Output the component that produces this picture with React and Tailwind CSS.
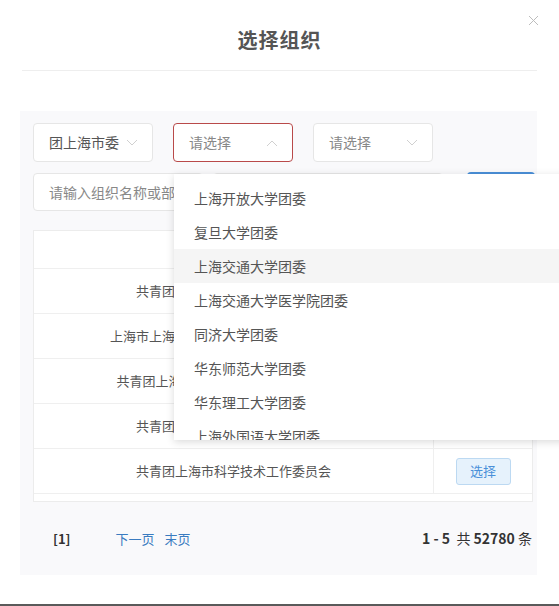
import React from "react";

const FONT = { fontFamily: '"Noto Sans CJK SC", "Noto Sans", sans-serif' };

function Chevron({ up = false }) {
  return (
    <svg width="12" height="8" viewBox="0 0 12 8" className="shrink-0">
      <polyline
        points={up ? "1,7 6,2 11,7" : "1,1 6,6 11,1"}
        fill="none"
        stroke="#d0d0d0"
        strokeWidth="1"
      />
    </svg>
  );
}

function Select({ value, placeholder, active }) {
  return (
    <div
      className={`w-[120px] h-[39px] bg-white rounded-[4px] border flex items-center justify-between pl-[15px] pr-[14px] text-[14px] ${
        active ? "border-[#b94a4a]" : "border-[#e6e6e6]"
      }`}
    >
      <span className={value ? "text-[#555]" : "text-[#888]"}>{value || placeholder}</span>
      <Chevron up={active} />
    </div>
  );
}

const rows = [
  "共青团上海市教育卫生工作委员会",
  "上海市上海青年管理干部学院共青团委员会",
  "共青团上海市城市建设和交通工作委员会",
  "共青团上海市商务工作委员会团委",
  "共青团上海市科学技术工作委员会",
];

const options = [
  "上海开放大学团委",
  "复旦大学团委",
  "上海交通大学团委",
  "上海交通大学医学院团委",
  "同济大学团委",
  "华东师范大学团委",
  "华东理工大学团委",
  "上海外国语大学团委",
];

export default function App() {
  return (
    <div className="relative w-[559px] h-[606px] bg-white overflow-hidden flex flex-col" style={FONT}>
      {/* header */}
      <div className="relative h-[70px] flex items-center justify-center pt-[10px]">
        <h1 className="text-[20px] font-bold text-[#555] tracking-[1px]">选择组织</h1>
        <svg className="absolute right-[20px] top-[15px]" width="11" height="11" viewBox="0 0 11 11">
          <path d="M1 1 L10 10 M10 1 L1 10" stroke="#bdbdbd" strokeWidth="1" />
        </svg>
      </div>
      <div className="mx-[22px] border-t border-[#eeeeee]" />

      {/* panel */}
      <div className="mt-[40px] ml-[20px] w-[517px] h-[464px] bg-[#f9f9fb] pl-[13px] pt-[12px] flex flex-col">
        <div className="flex gap-[20px]">
          <Select value="团上海市委" />
          <Select placeholder="请选择" active />
          <Select placeholder="请选择" />
        </div>
        <div className="flex items-start mt-[11px] h-[38px]">
          <div className="w-[170px] h-[38px] bg-white border border-[#e6e6e6] rounded-[4px] flex items-center pl-[15px] text-[14px] text-[#888] whitespace-nowrap overflow-hidden">
            请输入组织名称或部门名称
          </div>
          <div className="ml-[10px] w-[230px] h-[38px] bg-white border border-[#e6e6e6] rounded-[4px]" />
          <div className="ml-[24px] -mt-[1px] w-[68px] h-[38px] bg-[#4a8fd8] rounded-[4px]" />
        </div>

        {/* table */}
        <div className="mt-[19px] w-[500px] h-[278px] bg-white border border-[#ececec] flex flex-col">
          <div className="flex h-[38px] border-b border-[#efefef] text-[13px] text-[#555]">
            <div className="w-[400px] flex items-center justify-center border-r border-[#efefef]">组织名称</div>
            <div className="flex-1 flex items-center justify-center">操作</div>
          </div>
          {rows.map((r) => (
            <div key={r} className="flex h-[45px] border-b border-[#efefef] text-[13px] text-[#555]">
              <div className="w-[400px] flex items-center justify-center border-r border-[#efefef] whitespace-nowrap">
                {r}
              </div>
              <div className="flex-1 flex items-center justify-center">
                <div className="w-[55px] h-[27px] rounded-[3px] bg-[#e6f2fc] border border-[#bcd9f2] text-[#4a90d9] flex items-center justify-center text-[13px]">
                  选择
                </div>
              </div>
            </div>
          ))}
        </div>

        {/* pagination */}
        <div className="flex items-center h-[74px] pr-[5px] text-[13px]">
          <span className="ml-[20px] font-bold text-[#333]">[1]</span>
          <span className="ml-[45px] text-[#3a7bc0]">下一页</span>
          <span className="ml-[10px] text-[#3a7bc0]">末页</span>
          <span className="ml-auto text-[#333] text-[14px]">
            <b>1 - 5</b>&nbsp;&nbsp;共 <b>52780</b> 条
          </span>
        </div>
      </div>

      <div className="mt-auto h-[2px] bg-[#5a5a5a]" />

      {/* dropdown */}
      <div className="absolute left-[174px] top-[174px] w-[400px] h-[266px] bg-white shadow-[0_2px_8px_rgba(0,0,0,0.15)] overflow-hidden pt-[7px]">
        {options.map((o, i) => (
          <div
            key={o}
            className={`h-[34px] flex items-center pl-[20px] text-[14px] text-[#555] ${
              i === 2 ? "bg-[#f5f5f5]" : ""
            }`}
          >
            {o}
          </div>
        ))}
      </div>
    </div>
  );
}
